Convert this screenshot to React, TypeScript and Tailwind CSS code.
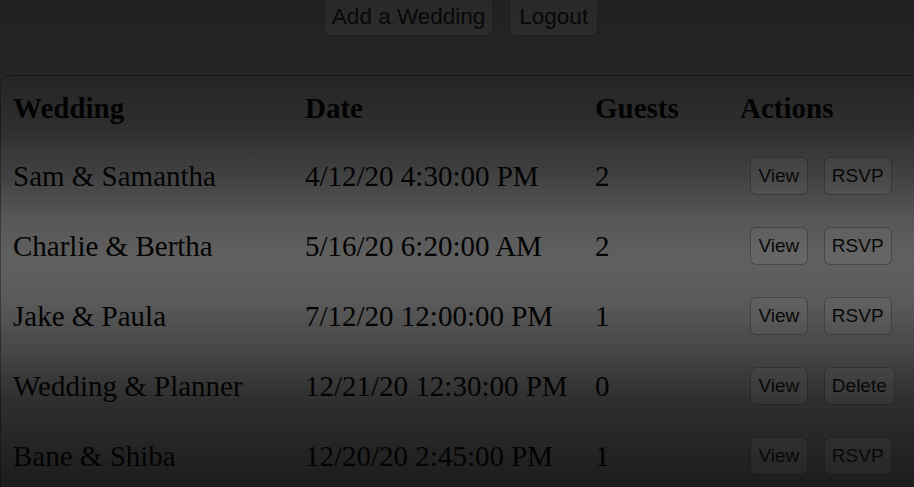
const weddings = [
  { name: "Sam & Samantha", date: "4/12/20 4:30:00 PM", guests: 2, action: "RSVP" },
  { name: "Charlie & Bertha", date: "5/16/20 6:20:00 AM", guests: 2, action: "RSVP" },
  { name: "Jake & Paula", date: "7/12/20 12:00:00 PM", guests: 1, action: "RSVP" },
  { name: "Wedding & Planner", date: "12/21/20 12:30:00 PM", guests: 0, action: "Delete" },
  { name: "Bane & Shiba", date: "12/20/20 2:45:00 PM", guests: 1, action: "RSVP" },
]

const btn =
  "rounded-[6px] border border-[rgba(0,0,0,0.28)] bg-[rgba(255,255,255,0.04)] text-[#080808] font-['Liberation_Sans',Arial,sans-serif] leading-none"

const cols = "grid grid-cols-[292px_290px_145px_1fr] pl-[12px] items-center"

export default function App() {
  return (
    <div className="h-[487px] overflow-hidden bg-[linear-gradient(180deg,#212121_0%,#252525_15%,#2e2e2e_26%,#414141_36%,#575757_45%,#606060_53%,#5a5a5a_62%,#464646_72%,#2f2f2f_82%,#1c1c1c_100%)] font-['Liberation_Serif','Times_New_Roman',serif] text-[#030303]">
      <div className="flex justify-center gap-[16px] pl-[8px] h-[75px]">
        <button className={`${btn} h-[42px] -mt-[6px] px-[7px] pt-[4px] text-[22.5px]`}>Add a Wedding</button>
        <button className={`${btn} h-[42px] -mt-[6px] px-[9px] pt-[4px] text-[22.5px]`}>Logout</button>
      </div>
      <div className="border-t border-l border-[rgba(0,0,0,0.35)] rounded-tl-[10px]">
        <div className={`${cols} h-[66px] font-bold text-[29px]`}>
          <div>Wedding</div>
          <div>Date</div>
          <div>Guests</div>
          <div>Actions</div>
        </div>
        {weddings.map((w) => (
          <div key={w.name} className={`${cols} h-[70px] text-[29px]`}>
            <div>{w.name}</div>
            <div>{w.date}</div>
            <div>{w.guests}</div>
            <div className="flex gap-[16px] pl-[10px] -mt-[3px]">
              <button className={`${btn} h-[38px] px-[7.5px] text-[19px]`}>View</button>
              <button className={`${btn} h-[38px] px-[7px] text-[19px]`}>{w.action}</button>
            </div>
          </div>
        ))}
      </div>
    </div>
  )
}
